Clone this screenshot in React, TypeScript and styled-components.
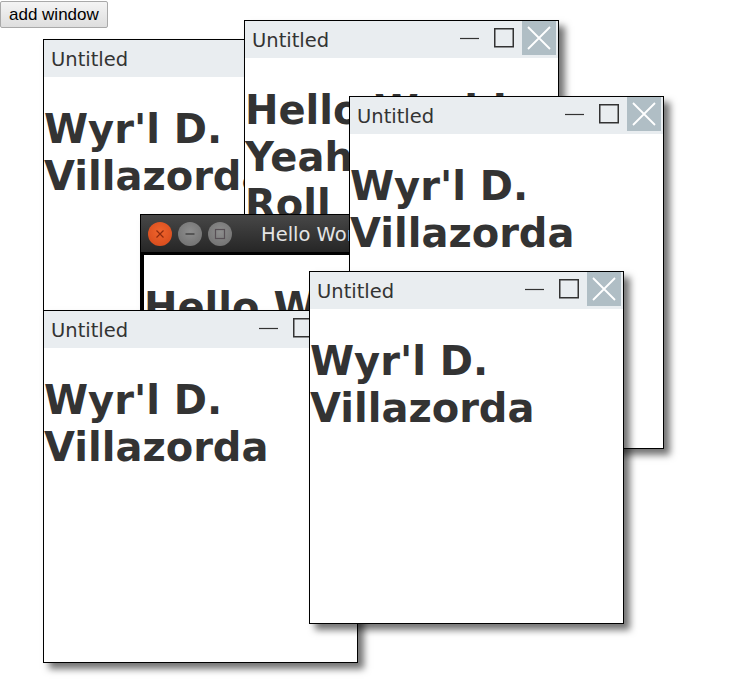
import React from "react";
import styled, { createGlobalStyle, css } from "styled-components";

const GlobalStyle = createGlobalStyle`
  html, body {
    margin: 0;
    padding: 0;
    background: #ffffff;
  }
  body {
    font-family: Verdana, "DejaVu Sans", sans-serif;
  }
`;

const Page = styled.div`
  position: relative;
  width: 739px;
  height: 700px;
  overflow: hidden;
`;

const AddButton = styled.button`
  display: block;
  margin: 1px 0 0 0;
  height: 27px;
  padding: 0 8px;
  font-family: "Liberation Sans", Arial, sans-serif;
  font-size: 17px;
  color: #000;
  background: linear-gradient(#f4f4f4, #dedede);
  border: 1px solid #a9a9a9;
  border-radius: 2px;
`;

const Win = styled.div<{ $x: number; $y: number; $z: number }>`
  position: absolute;
  left: ${(p) => p.$x}px;
  top: ${(p) => p.$y}px;
  z-index: ${(p) => p.$z};
  width: 315px;
  height: 353px;
  box-sizing: border-box;
  border: 1px solid #000;
  background: #fff;
  box-shadow: 6px 6px 7px rgba(0, 0, 0, 0.55);
  display: flex;
  flex-direction: column;
  overflow: hidden;
`;

const TitleBar = styled.div`
  height: 37px;
  flex: none;
  display: flex;
  align-items: flex-start;
  background: #e9edf0;
  padding-right: 2px;
`;

const Title = styled.div`
  flex: 1;
  align-self: center;
  padding: 2px 0 0 7px;
  font-size: 19.5px;
  color: #333;
  white-space: nowrap;
  overflow: hidden;
`;

const Controls = styled.div`
  display: flex;
  gap: 1px;
`;

const Ctrl = styled.div<{ $close?: boolean }>`
  width: 34px;
  height: 34px;
  display: flex;
  align-items: center;
  justify-content: center;
  ${(p) =>
    p.$close &&
    css`
      background: #b0bec5;
    `}
`;

const Body = styled.div<{ $framed?: boolean }>`
  flex: 1;
  background: #fff;
  ${(p) =>
    p.$framed &&
    css`
      border: 3px solid #000;
    `}
`;

const Heading = styled.h1`
  margin: 29px 0 0 0;
  font-family: Verdana, "DejaVu Sans", sans-serif;
  font-weight: bold;
  font-size: 40px;
  line-height: 47px;
  color: #333;
`;

const DarkBar = styled.div`
  height: 37px;
  flex: none;
  display: flex;
  align-items: center;
  padding-left: 7px;
  gap: 6px;
  background: linear-gradient(#474747, #262626);
`;

const Light = styled.div<{ $tone: "close" | "grey" }>`
  width: 24px;
  height: 24px;
  border-radius: 50%;
  flex: none;
  display: flex;
  align-items: center;
  justify-content: center;
  background: ${(p) =>
    p.$tone === "close"
      ? "radial-gradient(circle at 50% 40%, #f0642c, #d2471a)"
      : "radial-gradient(circle at 50% 40%, #8e8e8e, #6c6c6c)"};
`;

const DarkTitle = styled.div`
  margin-left: 23px;
  padding-top: 1px;
  font-size: 19.5px;
  color: #e4e4e4;
  white-space: nowrap;
`;

const MinIcon = () => (
  <svg width="19" height="3" viewBox="0 0 19 3">
    <line x1="0" y1="1.5" x2="19" y2="1.5" stroke="#333" strokeWidth="1.2" />
  </svg>
);

const MaxIcon = () => (
  <svg width="20" height="20" viewBox="0 0 20 20">
    <rect x="0.75" y="0.75" width="18.5" height="18" fill="none" stroke="#333" strokeWidth="1.5" />
  </svg>
);

const CloseIcon = () => (
  <svg width="24" height="24" viewBox="0 0 24 24">
    <path d="M1 1 L23 23 M23 1 L1 23" stroke="#fff" strokeWidth="1.8" />
  </svg>
);

const LightGlyph = ({ kind }: { kind: "x" | "min" | "max" }) => (
  <svg width="12" height="12" viewBox="0 0 12 12">
    {kind === "x" && <path d="M2.5 2.5 L9.5 9.5 M9.5 2.5 L2.5 9.5" stroke="#8d2a0e" strokeWidth="1.2" />}
    {kind === "min" && <line x1="1.5" y1="6" x2="10.5" y2="6" stroke="#555" strokeWidth="2" />}
    {kind === "max" && <rect x="1.5" y="1.5" width="9" height="9" fill="none" stroke="#574f55" strokeWidth="1.2" />}
  </svg>
);

type WinData = {
  x: number;
  y: number;
  z: number;
  title: string;
  text: string;
  dark?: boolean;
};

const windows: WinData[] = [
  { x: 43, y: 39, z: 1, title: "Untitled", text: "Wyr'l D. Villazorda" },
  { x: 244, y: 20, z: 2, title: "Untitled", text: "Hello World Yeah Rock 'n' Roll" },
  { x: 140, y: 214, z: 3, title: "Hello World", text: "Hello World", dark: true },
  { x: 349, y: 96, z: 4, title: "Untitled", text: "Wyr'l D. Villazorda" },
  { x: 43, y: 310, z: 5, title: "Untitled", text: "Wyr'l D. Villazorda" },
  { x: 309, y: 271, z: 6, title: "Untitled", text: "Wyr'l D. Villazorda" },
];

const AppWindow = ({ w }: { w: WinData }) => (
  <Win $x={w.x} $y={w.y} $z={w.z}>
    {w.dark ? (
      <DarkBar>
        <Light $tone="close">
          <LightGlyph kind="x" />
        </Light>
        <Light $tone="grey">
          <LightGlyph kind="min" />
        </Light>
        <Light $tone="grey">
          <LightGlyph kind="max" />
        </Light>
        <DarkTitle>{w.title}</DarkTitle>
      </DarkBar>
    ) : (
      <TitleBar>
        <Title>{w.title}</Title>
        <Controls>
          <Ctrl>
            <MinIcon />
          </Ctrl>
          <Ctrl>
            <MaxIcon />
          </Ctrl>
          <Ctrl $close>
            <CloseIcon />
          </Ctrl>
        </Controls>
      </TitleBar>
    )}
    <Body $framed={w.dark}>
      <Heading>{w.text}</Heading>
    </Body>
  </Win>
);

export default function App() {
  return (
    <Page>
      <GlobalStyle />
      <AddButton>add window</AddButton>
      {windows.map((w, i) => (
        <AppWindow key={i} w={w} />
      ))}
    </Page>
  );
}
